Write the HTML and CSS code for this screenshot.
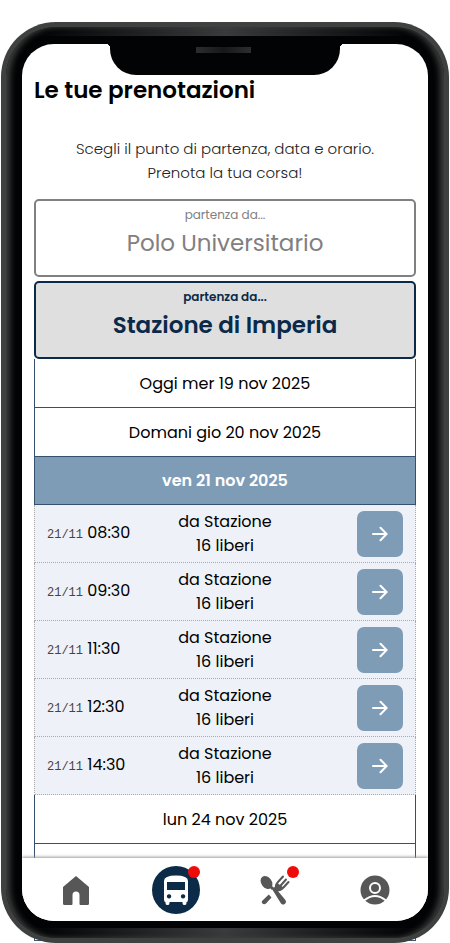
FILE: index.html
```html
<!DOCTYPE html>
<html lang="it">
<head>
<meta charset="utf-8">
<meta name="viewport" content="width=device-width, initial-scale=1">
<title>Le tue prenotazioni</title>
<link rel="stylesheet" href="styles.css">
</head>
<body>
<div class="phone">
  <div class="bezel">
    <div class="screen">
      <main class="content">
        <h1 class="title">Le tue prenotazioni</h1>
        <p class="intro">Scegli il punto di partenza, data e orario.<br>Prenota la tua corsa!</p>
        <div class="stops">
          <button class="stop" type="button"><span class="stop-label">partenza da...</span><span class="stop-name">Polo Universitario</span></button>
          <button class="stop stop-active" type="button"><span class="stop-label">partenza da...</span><span class="stop-name">Stazione di Imperia</span></button>
        </div>
        <div class="days">
          <button class="day" type="button">Oggi mer 19 nov 2025</button>
          <button class="day" type="button">Domani gio 20 nov 2025</button>
          <button class="day day-active" type="button">ven 21 nov 2025</button>
          <ul class="rides">
            <li class="ride"><div class="when"><span class="date">21/11</span> 08:30</div><div class="seats">da Stazione<br>16 liberi</div><button class="go" type="button" aria-label="Prenota 08:30"><svg viewBox="0 0 16 16"><path d="M1 8h13.500M8.500 1.800 14.700 8l-6.200 6.200"/></svg></button></li>
            <li class="ride"><div class="when"><span class="date">21/11</span> 09:30</div><div class="seats">da Stazione<br>16 liberi</div><button class="go" type="button" aria-label="Prenota 09:30"><svg viewBox="0 0 16 16"><path d="M1 8h13.500M8.500 1.800 14.700 8l-6.200 6.200"/></svg></button></li>
            <li class="ride"><div class="when"><span class="date">21/11</span> 11:30</div><div class="seats">da Stazione<br>16 liberi</div><button class="go" type="button" aria-label="Prenota 11:30"><svg viewBox="0 0 16 16"><path d="M1 8h13.500M8.500 1.800 14.700 8l-6.200 6.200"/></svg></button></li>
            <li class="ride"><div class="when"><span class="date">21/11</span> 12:30</div><div class="seats">da Stazione<br>16 liberi</div><button class="go" type="button" aria-label="Prenota 12:30"><svg viewBox="0 0 16 16"><path d="M1 8h13.500M8.500 1.800 14.700 8l-6.200 6.200"/></svg></button></li>
            <li class="ride"><div class="when"><span class="date">21/11</span> 14:30</div><div class="seats">da Stazione<br>16 liberi</div><button class="go" type="button" aria-label="Prenota 14:30"><svg viewBox="0 0 16 16"><path d="M1 8h13.500M8.500 1.800 14.700 8l-6.200 6.200"/></svg></button></li>
          </ul>
          <button class="day" type="button">lun 24 nov 2025</button>
          <div class="day"></div>
        </div>
      </main>
      <nav class="tabs">
        <a class="tab" href="#home" aria-label="Home"><svg class="icon" viewBox="0 0 30 30"><path d="M15 1 28 12V28.500Q28 30 26.500 30H19.500Q18.500 30 18.500 29V20Q18.500 16.500 15 16.500T11.500 20V29Q11.500 30 10.500 30H3.500Q2 30 2 28.500V12Z"/></svg></a>
        <a class="tab" href="#bus" aria-label="Corse"><svg class="icon icon-bus" viewBox="0 0 48 48"><circle cx="24" cy="24" r="24" fill="#0c2b48"/><path fill="#fff" fill-rule="evenodd" d="M12 15Q12 9.500 24 9.500T36 15V33.500Q36 36 34.500 36V37Q34.500 39 33 39H32Q30.500 39 30.500 37V36H17.500V37Q17.500 39 16 39H15Q13.500 39 13.500 37V36Q12 36 12 33.500ZM15 16H33V24H15ZM17 28.200a2.200 2.200 0 1 0 .1 0ZM31 28.200a2.200 2.200 0 1 0 .1 0Z"/></svg><span class="dot"></span></a>
        <a class="tab" href="#mensa" aria-label="Mensa"><svg class="icon" viewBox="0 0 30 30"><ellipse cx="6.500" cy="7.500" rx="5.200" ry="7" transform="rotate(-38 6.500 7.500)"/><path d="M9 10 13 14" fill="none" stroke="#575757" stroke-width="3"/><path d="M12 14 14.500 12 25 24.500Q27 27 25 28.800T21 28.500ZM8.800 19.500 11.500 22.500 6 28.500Q4 30 2.500 28.500T2.500 25.500Z"/><path d="M16 15.500C15 11 16 9 18 7L23 1.500M18 13.500 26 4.500M16.500 15.500C20 15.500 22 14.500 23.500 12.500L28.500 7" fill="none" stroke="#575757" stroke-width="2" stroke-linecap="round"/><path d="M15.500 15.500V10L18 8.500 23.500 12.500 21 15.500Z"/></svg><span class="dot"></span></a>
        <a class="tab" href="#profilo" aria-label="Profilo"><svg class="icon" viewBox="0 0 30 30"><circle cx="15" cy="15" r="14.500"/><circle cx="15" cy="13" r="5" fill="none" stroke="#fff" stroke-width="2"/><path d="M4 25.500Q15 16.500 26 25.500" fill="none" stroke="#fff" stroke-width="2"/></svg></a>
      </nav>
    </div>
    <div class="notch"><span class="speaker"></span></div>
  </div>
</div>
</body>
</html>
```

FILE: styles.css
```css
* { box-sizing: border-box; }
body {
  margin: 0;
  padding: 22px 1px 0;
  background: #fff;
  color: #000;
  font: 16px/24px Poppins, Inter, sans-serif;
}
button { font: inherit; color: inherit; cursor: pointer; }
.phone {
  position: relative;
  height: calc(100vh - 22px);
  padding: 5px;
  border-radius: 55px;
  background: #3f4140;
}
.phone::before {
  content: "";
  position: absolute;
  z-index: -1;
  inset: auto 33px 2px;
  height: 20px;
  border: 1px solid #3d5876;
}
.bezel {
  position: relative;
  height: 100%;
  padding: 17px 16px;
  border-radius: 50px;
  box-shadow: inset 6px 0 6px -2px #3f4140, inset -6px 0 6px -2px #3f4140;
  background:
    linear-gradient(90deg, #050607 40px, #3a3b3d 50%, #050607 calc(100% - 40px)) top / 100% 9px no-repeat,
    linear-gradient(90deg, #050607 40px, #3a3b3d 50%, #050607 calc(100% - 40px)) bottom / 100% 10px no-repeat,
    #020304;
}
.screen {
  display: flex;
  flex-direction: column;
  height: 100%;
  border-radius: 32px;
  background: #fff;
  overflow: hidden;
}
.notch {
  position: absolute;
  top: 16px;
  left: 50%;
  width: 230px;
  height: 32px;
  margin-left: -115px;
  border-radius: 0 0 26px 26px;
  background: #020304;
}
.notch::before, .notch::after {
  content: "";
  position: absolute;
  top: 1px;
  width: 4px;
  height: 4px;
}
.notch::before { right: 100%; background: radial-gradient(circle at 0 100%, transparent 4px, #020304 4px); }
.notch::after { left: 100%; background: radial-gradient(circle at 100% 100%, transparent 4px, #020304 4px); }
.speaker {
  display: block;
  width: 55px;
  height: 6px;
  margin: 4px 0 0 86px;
  background: linear-gradient(90deg, #2c2d2f, #17181a 50%, #2c2d2f);
}
.content {
  flex: 1;
  min-height: 0;
  padding: 28px 12px 0;
  overflow: hidden;
}
.title { margin: 0 0 29px; font-size: 23px; line-height: 36px; font-weight: 600; }
.intro { margin: 0 0 14px; text-align: center; font-size: 15px; font-weight: 300; color: #222; }
.stops { display: grid; gap: 4px; }
.stop {
  display: flex;
  flex-direction: column;
  align-items: center;
  height: 78px;
  padding: 5px;
  border: 2px solid #808080;
  border-radius: 5px;
  background: #fff;
  color: #808080;
}
.stop-label { font-size: 12px; line-height: 18px; }
.stop-name { font-size: 23px; line-height: 38px; }
.stop-active { border-color: #0b2a4a; background: #dfdfdf; color: #0b2a4a; font-weight: 600; }
.day {
  display: block;
  width: 100%;
  height: 49px;
  padding: 13px 12px 11px;
  border: 1px solid #34506e;
  border-top: 0;
  background: #fff;
  text-align: center;
}
.day-active { height: 48px; padding-top: 12px; background: #7f9cb7; color: #fff; font-weight: 600; }
.rides { margin: 0; padding: 0; list-style: none; }
.ride {
  display: grid;
  grid-template-columns: 1fr 1fr 1fr;
  align-items: center;
  height: 58px;
  padding: 0 12px;
  border: 1px dotted #aaa;
  border-top: 0;
  background: #eef2f8;
}
.date { font: 12px/24px "Liberation Mono", monospace; color: #444; }
.seats { text-align: center; }
.go {
  display: grid;
  place-items: center;
  justify-self: end;
  width: 46px;
  height: 46px;
  padding: 0;
  border: 0;
  border-radius: 7px;
  background: #7f9cb7;
}
.go svg { width: 16px; height: 16px; fill: none; stroke: #fff; stroke-width: 2; stroke-linecap: round; }
.tabs {
  position: relative;
  display: grid;
  grid-template-columns: repeat(4, 1fr);
  height: 63px;
  padding: 0 3px 0 4px;
  background: #fff;
  box-shadow: 0 -1px 3px #999;
}
.tab { display: grid; position: relative; place-items: center; }
.icon { width: 30px; height: 30px; fill: #575757; }
.icon-bus { width: 48px; height: 48px; }
.dot {
  position: absolute;
  top: 8px;
  left: calc(50% + 12px);
  width: 12px;
  height: 12px;
  border-radius: 50%;
  background: #f00b0b;
}
```
